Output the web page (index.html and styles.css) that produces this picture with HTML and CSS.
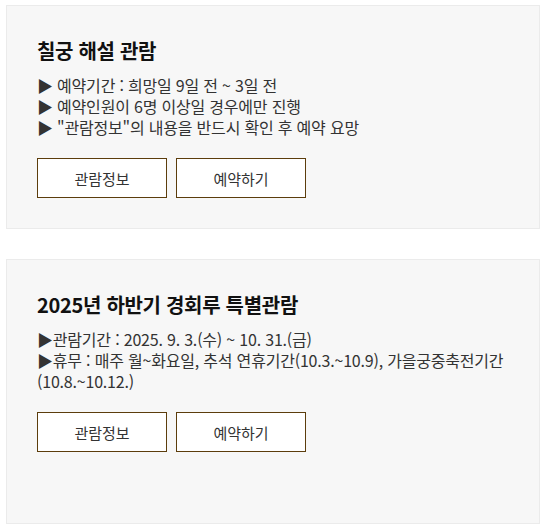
FILE: index.html
```html
<!DOCTYPE html>
<html lang="ko">
<head>
<meta charset="utf-8">
<link rel="stylesheet" href="styles.css">
</head>
<body>
<div class="list">
  <section class="card">
    <h2 class="card-title">칠궁 해설 관람</h2>
    <ul class="info">
      <li>▶ 예약기간 : 희망일 9일 전 ~ 3일 전</li>
      <li>▶ 예약인원이 6명 이상일 경우에만 진행</li>
      <li>▶ "관람정보"의 내용을 반드시 확인 후 예약 요망</li>
    </ul>
    <div class="actions">
      <a class="btn" href="#">관람정보</a>
      <a class="btn" href="#">예약하기</a>
    </div>
  </section>
  <section class="card card-tall">
    <h2 class="card-title">2025년 하반기 경회루 특별관람</h2>
    <ul class="info">
      <li>▶관람기간 : 2025. 9. 3.(수) ~ 10. 31.(금)</li>
      <li>▶휴무 : 매주 월~화요일, 추석 연휴기간(10.3.~10.9), 가을궁중축전기간(10.8.~10.12.)</li>
    </ul>
    <div class="actions">
      <a class="btn" href="#">관람정보</a>
      <a class="btn" href="#">예약하기</a>
    </div>
  </section>
</div>
</body>
</html>
```
FILE: styles.css
```css
html, body {
  margin: 0;
  padding: 0;
  background: #fff;
}
body {
  font-family: "Noto Sans CJK KR", "Noto Sans", sans-serif;
  color: #333;
}
.list {
  padding: 5px 1px 0 6px;
  display: flex;
  flex-direction: column;
  gap: 30px;
}
.card {
  background: #f7f7f7;
  border: 1px solid #ebebeb;
  padding: 30px;
}
.card-tall {
  min-height: 203px;
}
.card-title {
  margin: 0;
  font-size: 20px;
  font-weight: 700;
  line-height: 29px;
  color: #111;
  letter-spacing: -0.3px;
}
.info {
  list-style: none;
  margin: 10px 0 0;
  padding: 0;
  font-size: 16px;
  line-height: 21px;
  color: #333;
  letter-spacing: -0.2px;
}
.actions {
  display: flex;
  gap: 9px;
  margin-top: 20px;
}
.btn {
  display: flex;
  align-items: center;
  justify-content: center;
  width: 128px;
  height: 38px;
  border: 1px solid #5c3d0c;
  background: #fff;
  color: #333;
  font-size: 15px;
  text-decoration: none;
}
```
